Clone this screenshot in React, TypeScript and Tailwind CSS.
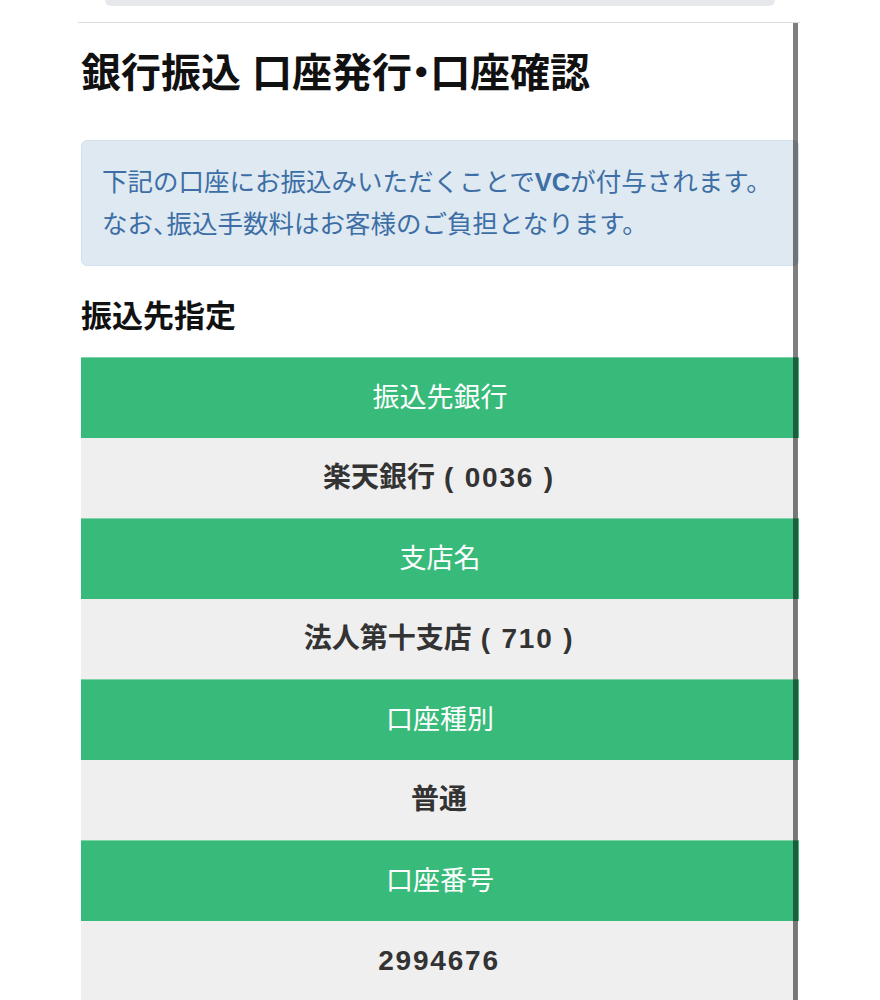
const rows = [
  { label: '振込先銀行', name: '楽天銀行', code: '( 0036 )' },
  { label: '支店名', name: '法人第十支店', code: '( 710 )' },
  { label: '口座種別', name: '普通', code: '' },
  { label: '口座番号', name: '', code: '2994676' },
];

export default function App() {
  return (
    <div className="relative min-h-[1000px] overflow-hidden bg-white font-['Liberation_Sans','Noto_Sans_CJK_JP',sans-serif]">
      {/* bottom edge of the search field above */}
      <div className="mx-[105px] h-[6px] rounded-b-[12px] bg-[#e7e8ec]" />

      <div className="ml-[78px] mr-[80px] mt-[16px] border-t border-[#dddddd] pl-[3px] pr-[1px]">
        <h1 className="mt-[26px] text-[40px] font-bold leading-[48px] text-[#111]">
          銀行振込 口座発行<span className="-mx-[11px]">・</span>口座確認
        </h1>

        <div className="mt-[43px] rounded-[6px] border border-[#d2e1ed] bg-[#dee9f2] px-[20px] py-[20px] text-[25.5px] leading-[42px] text-[#3d6ea5]">
          <p>
            下記の口座にお振込みいただくことで<span className="font-bold">VC</span>が付与されます。
          </p>
          <p>
            なお<span className="-mr-[12px]">、</span>振込手数料はお客様のご負担となります。
          </p>
        </div>

        <h2 className="mt-[33px] text-[31px] font-bold leading-[36px] text-[#111]">振込先指定</h2>

        <div className="mt-[22px]">
          {rows.map((r) => (
            <div key={r.label}>
              <div className="flex h-[81px] items-center justify-center border-t border-[#7fd3a8] bg-[#38bb7a] text-[27px] text-white">
                {r.label}
              </div>
              <div className="mr-[2px] flex h-[80px] items-center justify-center bg-[#efeff0] text-[28px] font-bold text-[#333]">
                {r.name}
                {r.name && r.code ? <span className="w-[9px] shrink-0" /> : null}
                {r.code && <span className="tracking-[1.8px]">{r.code}</span>}
              </div>
            </div>
          ))}
        </div>
      </div>

      {/* overlay scroll indicator */}
      <div className="absolute bottom-0 left-[793px] top-[23px] w-[5px] bg-black/50" />
    </div>
  );
}
